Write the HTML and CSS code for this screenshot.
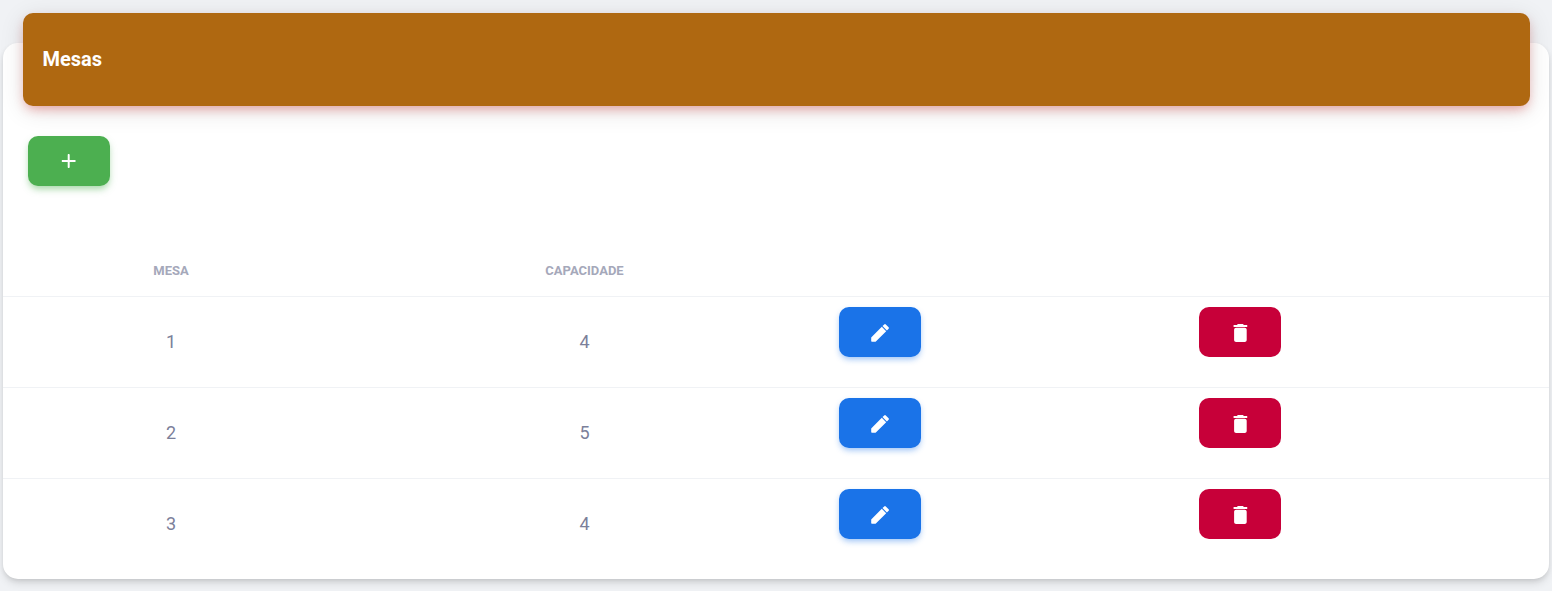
FILE: index.html
```html
<!DOCTYPE html>
<html lang="pt-BR">
<head>
<meta charset="utf-8">
<title>Mesas</title>
<link rel="stylesheet" href="styles.css">
</head>
<body>
<svg class="sprite" width="0" height="0">
  <symbol id="add" viewBox="0 0 24 24"><path d="M18 13h-5v5c0 .55-.45 1-1 1s-1-.45-1-1v-5H6c-.55 0-1-.45-1-1s.45-1 1-1h5V6c0-.55.45-1 1-1s1 .45 1 1v5h5c.55 0 1 .45 1 1s-.45 1-1 1z"/></symbol>
  <symbol id="edit" viewBox="0 0 24 24"><path d="M3.200 16.400v3.700q0 .7.7.7h3.700L18.200 10.200l-4.400-4.400zM20.600 7.800q.8-.8 0-1.600l-2.800-2.800q-.8-.8-1.600 0l-1.700 1.700 4.400 4.400z"/></symbol>
  <symbol id="delete" viewBox="0 0 24 24"><path d="M5.700 19c0 1.200.9 2 2 2h8.600c1.100 0 2-.8 2-2V8.700c0-1.100-.9-2-2-2H7.700c-1.100 0-2 .9-2 2zM18 4h-2.500l-.71-.71c-.18-.18-.44-.29-.7-.29H9.910c-.26 0-.52.11-.7.290L8.500 4H6c-.55 0-1 .45-1 1s.45 1 1 1h12c.55 0 1-.45 1-1s-.45-1-1-1z"/></symbol>
</svg>
<main class="card">
  <header class="card-header"><h1 class="title">Mesas</h1></header>
  <div class="toolbar">
    <button class="btn btn-success" aria-label="Adicionar"><svg class="icon"><use href="#add" x="-.3"/></svg></button>
  </div>
  <table class="table">
    <colgroup><col class="col-mesa"><col class="col-capacity"><col class="col-edit"><col></colgroup>
    <thead><tr><th>Mesa</th><th>Capacidade</th><th></th><th></th></tr></thead>
    <tbody>
      <tr><td>1</td><td>4</td>
        <td class="action"><button class="btn btn-info" aria-label="Editar"><svg class="icon"><use href="#edit"/></svg></button></td>
        <td class="action"><button class="btn btn-danger" aria-label="Excluir"><svg class="icon"><use href="#delete" x=".4"/></svg></button></td></tr>
      <tr><td>2</td><td>5</td>
        <td class="action"><button class="btn btn-info" aria-label="Editar"><svg class="icon"><use href="#edit"/></svg></button></td>
        <td class="action"><button class="btn btn-danger" aria-label="Excluir"><svg class="icon"><use href="#delete" x=".4"/></svg></button></td></tr>
      <tr><td>3</td><td>4</td>
        <td class="action"><button class="btn btn-info" aria-label="Editar"><svg class="icon"><use href="#edit"/></svg></button></td>
        <td class="action"><button class="btn btn-danger" aria-label="Excluir"><svg class="icon"><use href="#delete" x=".4"/></svg></button></td></tr>
    </tbody>
  </table>
</main>
</body>
</html>
```
FILE: styles.css
```css
* { box-sizing: border-box; }
body {
  margin: 0;
  height: 591px;
  overflow: hidden;
  display: flow-root;
  background: #f0f2f5;
  font-family: Roboto, "Liberation Sans", sans-serif;
  color: #7b809a;
}
.sprite { display: none; }
.card {
  display: flow-root;
  height: 536px;
  margin: 43px 3px 0;
  background: #fff;
  border-radius: 15px;
  box-shadow: 0 5px 8px -1px rgba(0, 0, 0, .12), 0 2px 5px -1px rgba(0, 0, 0, .1);
}
.card-header {
  display: flex;
  align-items: center;
  height: 93px;
  margin: -30px 19px 0 20px;
  padding: 0 0 2px 19.500px;
  background: #af6811;
  border-radius: 10px;
  box-shadow: 0 5px 25px 0 rgba(0, 0, 0, .12), 0 5px 12px -3px rgba(233, 30, 30, .4);
}
.title {
  margin: 0;
  color: #fff;
  font-size: 20px;
  font-weight: 700;
  line-height: 24px;
}
.toolbar { padding: 30px 25px 0; height: 139px; }
.btn {
  display: flex;
  align-items: center;
  justify-content: center;
  width: 82px;
  height: 50px;
  padding: 0;
  border: 0;
  border-radius: 10px;
  color: #fff;
}
.btn-success {
  background: #4caf50;
  box-shadow: 0 4px 7px -1px rgba(76, 175, 80, .5);
}
.btn-info {
  padding-top: 2px;
  background: #1a73e8;
  box-shadow: 0 3px 6px -1px rgba(26, 115, 232, .45);
}
.btn-danger { padding-top: 2px; background: #c70039; }
.icon { width: 24px; height: 24px; fill: currentColor; overflow: visible; }
.table {
  width: 100%;
  table-layout: fixed;
  border-collapse: separate;
  border-spacing: 0;
}
.col-mesa { width: 336px; }
.col-capacity { width: 491px; }
.col-edit { width: 360px; }
th {
  height: 52px;
  padding: 0;
  border-bottom: 1px solid #f0f2f5;
  color: #a5a8ba;
  font-size: 13px;
  font-weight: 700;
  text-transform: uppercase;
}
td {
  height: 91px;
  padding: 0 0 2px;
  border-bottom: 1px solid #f0f2f5;
  font-size: 18px;
  text-align: center;
}
tbody tr:last-child td { border-bottom-color: transparent; }
.action { padding: 10px 9px; vertical-align: top; }
```
